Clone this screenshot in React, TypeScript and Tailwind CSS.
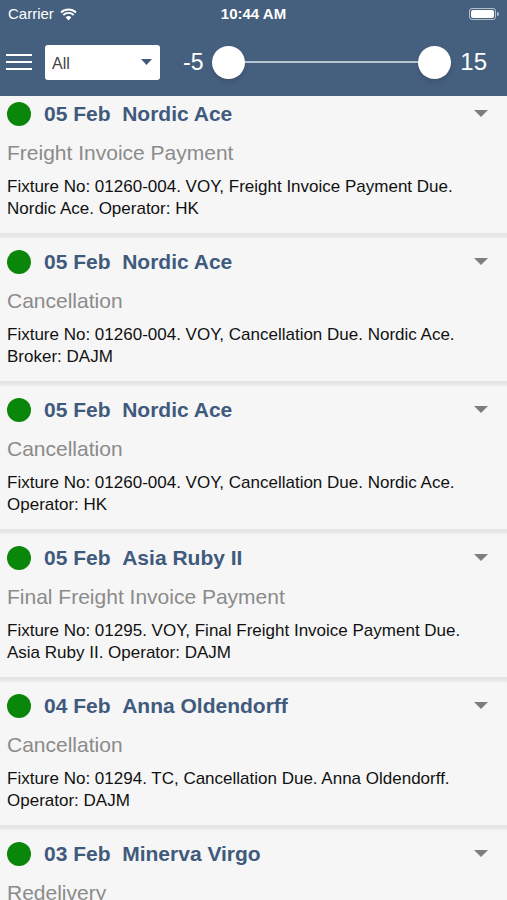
import React from 'react';

type Item = {
  date: string;
  vessel: string;
  title: string;
  detail: string;
};

const items: Item[] = [
  {
    date: '05 Feb',
    vessel: 'Nordic Ace',
    title: 'Freight Invoice Payment',
    detail: 'Fixture No: 01260-004. VOY, Freight Invoice Payment Due. Nordic Ace. Operator: HK',
  },
  {
    date: '05 Feb',
    vessel: 'Nordic Ace',
    title: 'Cancellation',
    detail: 'Fixture No: 01260-004. VOY, Cancellation Due. Nordic Ace. Broker: DAJM',
  },
  {
    date: '05 Feb',
    vessel: 'Nordic Ace',
    title: 'Cancellation',
    detail: 'Fixture No: 01260-004. VOY, Cancellation Due. Nordic Ace. Operator: HK',
  },
  {
    date: '05 Feb',
    vessel: 'Asia Ruby II',
    title: 'Final Freight Invoice Payment',
    detail: 'Fixture No: 01295. VOY, Final Freight Invoice Payment Due. Asia Ruby II. Operator: DAJM',
  },
  {
    date: '04 Feb',
    vessel: 'Anna Oldendorff',
    title: 'Cancellation',
    detail: 'Fixture No: 01294. TC, Cancellation Due. Anna Oldendorff. Operator: DAJM',
  },
  {
    date: '03 Feb',
    vessel: 'Minerva Virgo',
    title: 'Redelivery',
    detail: 'Fixture No: 01290. TC, Redelivery Due. Minerva Virgo. Operator: DAJM',
  },
];

const Card = ({ item }: { item: Item }) => {
  return (
    <div>
      <div className="bg-[#f6f6f6] pt-[6px] pb-[13px] pl-[7px] pr-[20px]">
        <div className="flex h-9 items-center">
          <div className="h-6 w-6 rounded-full bg-[#0a870a]" />
          <p className="ml-[13px] text-[21px] font-bold text-[#3f5a7c]">
            {item.date}&nbsp;&nbsp;{item.vessel}
          </p>
          <svg className="ml-auto mr-[-1px]" width="14" height="8" viewBox="0 0 14 8">
            <path d="M0 0 H14 L7 7 Z" fill="#7d7d7d" />
          </svg>
        </div>
        <p className="mt-[9px] text-[21px] leading-6 text-[#8b8b8b]">{item.title}</p>
        <p className="mt-[11px] text-[17px] leading-[22px] text-[#111]">{item.detail}</p>
      </div>
      <div className="h-[5px] bg-gradient-to-b from-[#e2e2e2] to-[#ececec]" />
    </div>
  );
};

const App = () => {
  return (
    <div className="flex h-[900px] w-[507px] flex-col overflow-hidden bg-[#f6f6f6] font-['Liberation_Sans',Arial,sans-serif]">
      <div className="h-[96px] shrink-0 bg-[#455f7e] text-white">
        <div className="relative flex h-[28px] items-center px-[8px]">
          <span className="text-[15px]">Carrier</span>
          <svg className="ml-[6px]" width="17" height="13" viewBox="0 0 17 13">
            <path d="M8.5 12.5 L5.6 9.3 A4.2 4.2 0 0 1 11.4 9.3 Z" fill="white" />
            <path d="M3.3 7 A7.5 7.5 0 0 1 13.7 7" stroke="white" strokeWidth="1.9" fill="none" />
            <path d="M1 4.5 A11 11 0 0 1 16 4.5" stroke="white" strokeWidth="1.9" fill="none" />
          </svg>
          <span className="absolute left-1/2 -translate-x-1/2 text-[15px] font-bold">10:44 AM</span>
          <div className="ml-auto flex items-center">
            <div className="flex h-[12px] w-[27px] items-center rounded-[3px] border border-white/60 p-[1px]">
              <div className="h-full w-full rounded-[2px] bg-white" />
            </div>
            <div className="ml-[1px] h-[4px] w-[2px] rounded-r-sm bg-white/60" />
          </div>
        </div>
        <div className="flex h-[68px] items-center pl-[6px] pr-[20px]">
          <div className="flex w-[26px] flex-col gap-[5px]">
            <div className="h-[2px] bg-white" />
            <div className="h-[2px] bg-white" />
            <div className="h-[2px] bg-white" />
          </div>
          <div className="ml-[13px] flex h-[35px] w-[115px] items-center rounded-[3px] bg-white pl-[7px] pr-[8px]">
            <span className="pt-[3px] text-[16px] text-[#444]">All</span>
            <svg className="ml-auto" width="11" height="6" viewBox="0 0 11 6">
              <path d="M0 0 H11 L5.5 6 Z" fill="#3f5a7c" />
            </svg>
          </div>
          <span className="ml-[23px] text-[23px]">-5</span>
          <div className="relative mx-[9px] flex h-[34px] flex-1 items-center">
            <div className="h-[2px] w-full bg-[#b8c4d2]" />
            <div className="absolute left-0 h-[33px] w-[33px] rounded-full bg-white shadow-md" />
            <div className="absolute right-0 h-[33px] w-[33px] rounded-full bg-white shadow-md" />
          </div>
          <span className="text-[24px]">15</span>
        </div>
      </div>
      <div className="flex-1 overflow-hidden">
        <div className="-mt-[6px]">
          {items.map((item, i) => (
            <Card key={i} item={item} />
          ))}
        </div>
      </div>
    </div>
  );
};

export default App;
